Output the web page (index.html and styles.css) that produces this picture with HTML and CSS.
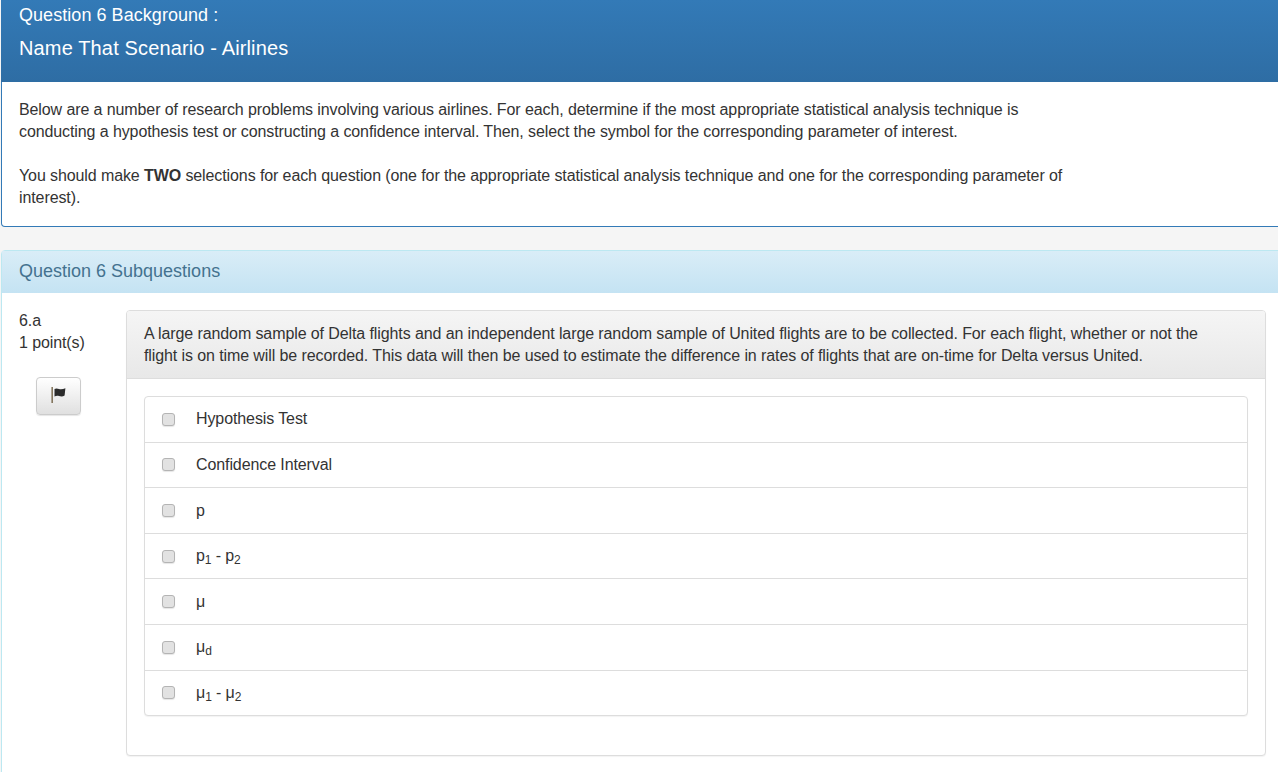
FILE: index.html
```html
<!DOCTYPE html>
<html lang="en">
<head>
<meta charset="utf-8">
<title>Question 6</title>
<link rel="stylesheet" href="styles.css">
</head>
<body>
<div class="page">
  <section class="panel panel-primary">
    <header class="panel-heading">
      <div class="bg-label">Question 6 Background :</div>
      <h1 class="bg-title">Name That Scenario - Airlines</h1>
    </header>
    <div class="bg-body">
      <p>Below are a number of research problems involving various airlines. For each, determine if the most appropriate statistical analysis technique is conducting a hypothesis test or constructing a confidence interval. Then, select the symbol for the corresponding parameter of interest.</p>
      <p>You should make <strong>TWO</strong> selections for each question (one for the appropriate statistical analysis technique and one for the corresponding parameter of interest).</p>
    </div>
  </section>
  <section class="panel panel-info">
    <header class="info-heading">Question 6 Subquestions</header>
    <div class="question">
      <aside class="meta">
        <div>6.a</div>
        <div>1 point(s)</div>
        <button class="flag-btn" type="button" aria-label="Flag question">
          <svg width="15" height="16" viewBox="0 0 15 16" aria-hidden="true">
            <rect x="0.5" y="0" width="1.3" height="16" fill="#6b5a3c"/>
            <path d="M3.5 2 C5 1 6.6 1.4 8 2 C9.6 2.6 12 2.4 14.4 1.2 L13.6 8.6 C11.6 9.8 9.8 9.6 8 9 C6.4 8.4 5 8.6 3.5 9.6 Z" fill="#2b2b2b"/>
          </svg>
        </button>
      </aside>
      <div class="card">
        <div class="card-head">A large random sample of Delta flights and an independent large random sample of United flights are to be collected. For each flight, whether or not the flight is on time will be recorded. This data will then be used to estimate the difference in rates of flights that are on-time for Delta versus United.</div>
        <div class="card-body">
          <ul class="options">
            <li><input type="checkbox" class="check"><span>Hypothesis Test</span></li>
            <li><input type="checkbox" class="check"><span>Confidence Interval</span></li>
            <li><input type="checkbox" class="check"><span>p</span></li>
            <li><input type="checkbox" class="check"><span>p<sub>1</sub> - p<sub>2</sub></span></li>
            <li><input type="checkbox" class="check"><span>μ</span></li>
            <li><input type="checkbox" class="check"><span>μ<sub>d</sub></span></li>
            <li><input type="checkbox" class="check"><span>μ<sub>1</sub> - μ<sub>2</sub></span></li>
          </ul>
        </div>
      </div>
    </div>
  </section>
</div>
</body>
</html>
```
FILE: styles.css
```css
* { box-sizing: border-box; }
html, body { margin: 0; height: 772px; overflow: hidden; }
body {
  background: #f5f5f5;
  color: #333;
  font-family: "Liberation Sans", Arial, sans-serif;
  font-size: 16px;
  line-height: 22px;
  letter-spacing: -0.1px;
}
.page { width: 1300px; padding-left: 1px; }
.panel { background: #fff; border: 1px solid transparent; border-top: 0; }
.panel-primary { border-color: #337ab7; border-radius: 0 0 4px 4px; height: 227px; }
.panel-heading {
  height: 82px;
  margin: 0 -1px;
  padding: 4px 18px 0;
  color: #fff;
  background: linear-gradient(to bottom, #337ab7, #2e6da4);
}
.bg-label { font-size: 18px; line-height: 22px; letter-spacing: 0.05px; }
.bg-title { margin: 11px 0 0; font-size: 20px; font-weight: 400; line-height: 22px; letter-spacing: 0.14px; }
.bg-body { padding: 17px 17px 0; }
.bg-body p { margin: 0 0 22px; width: 1050px; }
.panel-info {
  margin-top: 23px;
  border: 1px solid #bce8f1;
  border-radius: 4px 4px 0 0;
  height: 540px;
}
.info-heading {
  height: 42px;
  padding: 10px 17px;
  font-size: 18px;
  line-height: 20px;
  letter-spacing: 0;
  color: #44728f;
  background: linear-gradient(to bottom, #d9edf7, #c4e3f3);
}
.question { display: flex; padding-top: 17px; padding-left: 17px; }
.meta { width: 107px; flex: none; }
.flag-btn {
  display: flex;
  align-items: center;
  justify-content: center;
  width: 45px;
  height: 38px;
  margin: 23px 0 0 17px;
  padding: 0 0 2px;
  background: linear-gradient(to bottom, #fff, #e0e0e0);
  border: 1px solid #ccc;
  border-radius: 4px;
  box-shadow: 0 1px 1px rgba(0, 0, 0, .1);
}
.card {
  width: 1140px;
  height: 446px;
  flex: none;
  background: #fff;
  border: 1px solid #ddd;
  border-radius: 4px;
  box-shadow: 0 1px 1px rgba(0, 0, 0, .05);
}
.card-head {
  height: 68px;
  padding: 12px 50px 12px 17px;
  background: linear-gradient(to bottom, #f5f5f5, #e8e8e8);
  border-bottom: 1px solid #ddd;
  border-radius: 3px 3px 0 0;
}
.card-body { padding: 17px; }
.options {
  margin: 0;
  padding: 0;
  list-style: none;
  background: #fff;
  border: 1px solid #ddd;
  border-radius: 4px;
  box-shadow: 0 1px 1px rgba(0, 0, 0, .05);
}
.options li {
  display: flex;
  align-items: center;
  height: 45.62px;
  padding-left: 17px;
  border-bottom: 1px solid #ddd;
}
.options li:last-child { border-bottom: 0; height: 44.62px; }
.check {
  appearance: none;
  -webkit-appearance: none;
  flex: none;
  width: 13px;
  height: 13px;
  margin: 0 21px 0 0;
  background: #e2e2e2;
  border: 1px solid #b4b4b4;
  border-radius: 3px;
  box-shadow: 0 1px 1px rgba(0, 0, 0, .1);
}
sub { font-size: 75%; line-height: 0; position: relative; bottom: -.25em; vertical-align: baseline; }
```
